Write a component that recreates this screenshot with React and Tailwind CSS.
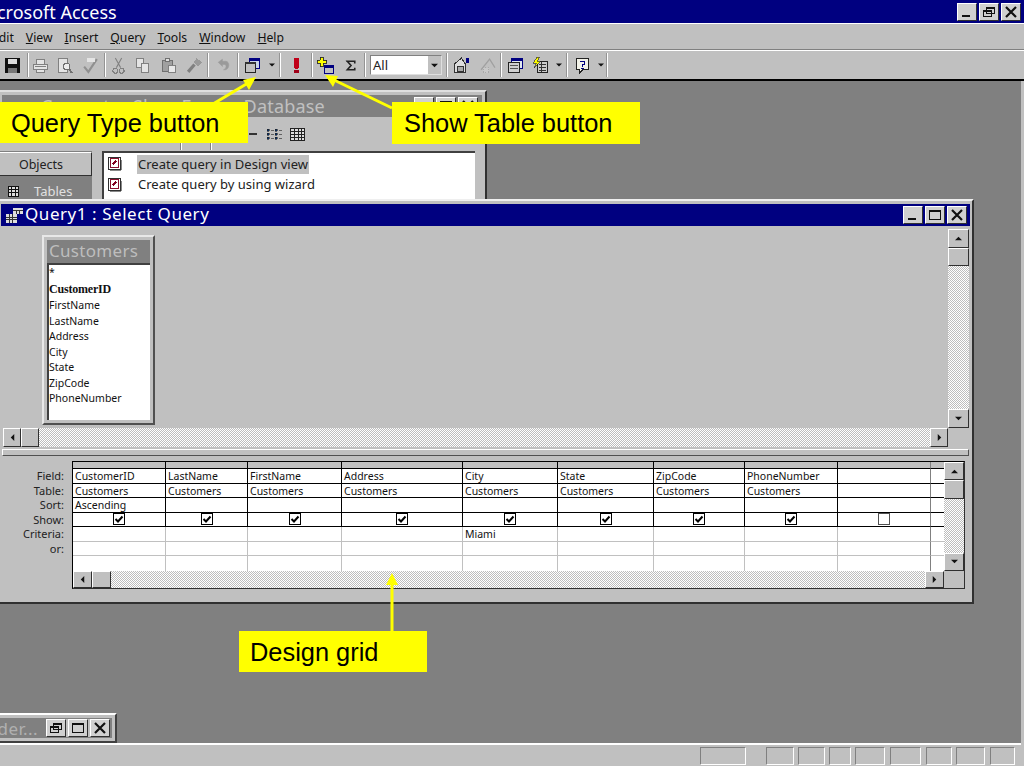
import React from 'react';

const ui = { fontFamily: '"Noto Sans", sans-serif' };
const hatch = 'bg-[repeating-conic-gradient(#ffffff_0_25%,#bdbdbd_0_50%)] bg-[length:2px_2px]';
const bevel = 'border border-t-white border-l-white border-r-[#303030] border-b-[#303030] bg-[#c0c0c0]';

const Ico = ({ children }) => (
    <svg viewBox="0 0 16 16" className="w-[17px] h-[17px]" shapeRendering="crispEdges">{children}</svg>
);

const SaveIcon = () => <Ico><rect x="1" y="1" width="14" height="14" fill="#111" /><rect x="4" y="2" width="8" height="5" fill="#ddd" /><rect x="4" y="10" width="8" height="5" fill="#777" /></Ico>;
const PrintIcon = () => <Ico><path d="M4 2h8v5H4zM1 7h14v5H1zM4 12h8v3H4z" fill="#e4e4e4" stroke="#808080" /><path d="M3 9h10" stroke="#808080" /></Ico>;
const PreviewIcon = () => <Ico><path d="M2 1h9v14H2z" fill="#e4e4e4" stroke="#808080" /><circle cx="10" cy="9" r="3" fill="#eee" stroke="#707070" /><path d="M12 11l3 4" stroke="#707070" strokeWidth="2" /></Ico>;
const SpellIcon = () => <Ico><path d="M2 9l4 5 8-12" fill="none" stroke="#909090" strokeWidth="2" shapeRendering="auto" /><path d="M5 1h7v4H5z" fill="#e4e4e4" /></Ico>;
const CutIcon = () => <Ico><path d="M5 1l5 9M11 1l-5 9" stroke="#808080" fill="none" shapeRendering="auto" /><circle cx="5" cy="13" r="2.3" fill="none" stroke="#808080" /><circle cx="11" cy="13" r="2.3" fill="none" stroke="#808080" /></Ico>;
const CopyIcon = () => <Ico><path d="M2 1h7v9H2z" fill="#e4e4e4" stroke="#808080" /><path d="M7 6h7v9H7z" fill="#e4e4e4" stroke="#808080" /></Ico>;
const PasteIcon = () => <Ico><path d="M2 3h10v11H2z" fill="#a0a0a0" stroke="#707070" /><path d="M5 1h4v3H5z" fill="#ddd" stroke="#707070" /><path d="M8 8h7v7H8z" fill="#e8e8e8" stroke="#808080" /></Ico>;
const PainterIcon = () => <Ico><path d="M10 1l5 4-4 4-4-4z" fill="#999" /><path d="M8 7l-6 7" stroke="#808080" strokeWidth="3" shapeRendering="auto" /></Ico>;
const UndoIcon = () => <Ico><path d="M3 5l4-3v2h3c4 0 4 7 0 8H8c3-1 3-5 1-5H7v2z" fill="#9a9a9a" stroke="#9a9a9a" strokeWidth="0.5" shapeRendering="auto" /></Ico>;
const QueryTypeIcon = () => <Ico><rect x="5" y="1" width="10" height="10" fill="#c8d4e8" stroke="#000080" /><rect x="5" y="1" width="10" height="3" fill="#000080" /><rect x="1" y="5" width="10" height="10" fill="#c0c0c0" stroke="#222" /><rect x="1" y="5" width="10" height="2" fill="#333" /></Ico>;
const BangIcon = () => <Ico><rect x="6" y="1" width="4" height="9" fill="#c00018" /><rect x="7" y="10" width="2" height="1" fill="#c00018" /><rect x="6" y="12" width="4" height="3" fill="#a00018" /></Ico>;
const ShowTableIcon = () => <Ico><rect x="7" y="8" width="9" height="8" fill="#c0c0c0" stroke="#000080" /><rect x="7" y="8" width="9" height="2" fill="#000080" /><path d="M3 0h3v3h3v3H6v3H3V6H0V3h3z" fill="#ffff00" stroke="#222" strokeWidth="0.8" /></Ico>;
const SigmaIcon = () => <Ico><path d="M4 4h8v2M11 4H5l3.5 4L5 12h7v-2" fill="none" stroke="#222" strokeWidth="1.5" shapeRendering="auto" /></Ico>;
const PropsIcon = () => <Ico><path d="M8 1L1 7v8h11V7z" fill="#ddd" stroke="#333" /><rect x="4" y="9" width="6" height="5" fill="#aaa" stroke="#333" /><rect x="12" y="1" width="3" height="5" fill="#000080" /></Ico>;
const BuildIcon = () => <Ico><path d="M2 12L10 2l5 8" fill="none" stroke="#a0a0a0" strokeWidth="1.2" shapeRendering="auto" /><path d="M4 10h5v5H4z" fill="#c8c8c8" stroke="#a8a8a8" strokeDasharray="1 1" /></Ico>;
const DbWinIcon = () => <Ico><rect x="4" y="1" width="11" height="10" fill="#e0e8f0" stroke="#000080" /><rect x="4" y="1" width="11" height="3" fill="#000080" /><rect x="1" y="5" width="11" height="10" fill="#d0d0d0" stroke="#222" /><path d="M3 8h7M3 11h7" stroke="#555" /></Ico>;
const NewObjIcon = () => <Ico><rect x="5" y="4" width="10" height="11" fill="#ccc" stroke="#222" /><path d="M7 7h6M7 10h6M7 13h6M9 5v9" stroke="#333" /><path d="M5 0L1 6h3L2 10l6-6H5l2-4z" fill="#ffff00" stroke="#222" strokeWidth="0.6" /></Ico>;
const HelpIcon = () => <Ico><path d="M2 1h12v11H8l-3 3v-3H2z" fill="#f2f2e8" stroke="#222" /><path d="M6 4h4v3H8v2" fill="none" stroke="#000080" strokeWidth="1.4" /><rect x="7" y="10" width="2" height="1" fill="#000080" /></Ico>;

const Tri = ({ dir, size = 7 }) => {
    const pts = {
        up: '0,6 4,2 8,6',
        down: '0,2 8,2 4,6',
        left: '6,0 6,8 2,4',
        right: '2,0 2,8 6,4',
    };
    return <svg viewBox="0 0 8 8" style={{ width: size, height: size }}><polygon points={pts[dir]} fill="#111" /></svg>;
};

const Drop = ({ w }) => <div className={`${w} flex items-center justify-center`}><Tri dir="down" size={6} /></div>;
const Sep = () => <div className="w-[2px] h-[24px] border-l border-r border-l-[#949494] border-r-white" />;
const Tool = ({ w, children }) => <div className={`${w} h-full flex items-center justify-center`}>{children}</div>;

const WinBtn = ({ kind, className = 'w-[20px] h-[18px]' }) => (
    <div className={`${className} bg-[#d0d0d0] border border-t-white border-l-white border-r-[#303030] border-b-[#303030] flex items-center justify-center`}>
        <svg viewBox="0 0 14 12" className="w-[14px] h-[12px]" shapeRendering="crispEdges">
            {kind === 'min' && <rect x="2" y="9" width="8" height="2" fill="#111" />}
            {kind === 'max' && <path d="M1.5 1.5h11v9h-11zM1.5 2.5h11" fill="none" stroke="#111" />}
            {kind === 'restore' && <path d="M4.5 1.5h8v6h-8zM1.5 4.5h8v6h-8zM4.5 2.5h8M1.5 5.5h8" fill="#d0d0d0" stroke="#111" />}
            {kind === 'close' && <path d="M2 1l10 10M12 1L2 11" stroke="#111" strokeWidth="2.2" shapeRendering="auto" />}
        </svg>
    </div>
);

const Arrow = ({ dir, className }) => (
    <div className={`${bevel} flex items-center justify-center shrink-0 ${className}`}><Tri dir={dir} /></div>
);

const VScroll = ({ up, thumb, track }) => (
    <div className="flex flex-col w-full">
        <Arrow dir="up" className={up} />
        <div className={`${bevel} w-full ${thumb}`} />
        <div className={`${hatch} ${track}`} />
        <Arrow dir="down" className={up} />
    </div>
);

const HScroll = ({ btn, className }) => (
    <div className={`flex ${className}`}>
        <Arrow dir="left" className={btn} />
        <div className={`${bevel} ${btn}`} />
        <div className={`${hatch} flex-1`} />
        <Arrow dir="right" className={btn} />
    </div>
);

const DocIcon = () => (
    <svg viewBox="0 0 16 16" className="w-[15px] h-[15px]" shapeRendering="crispEdges">
        <rect x="1" y="0" width="12" height="13" fill="#fff" stroke="#222" />
        <rect x="3" y="2" width="8" height="9" fill="#fff" stroke="#800020" />
        <path d="M5 8l4-4" stroke="#800020" strokeWidth="2" />
        <path d="M2 14h12V3" fill="none" stroke="#808080" />
    </svg>
);

const menus = [
    ['E', 'dit'], ['V', 'iew'], ['I', 'nsert'], ['Q', 'uery'], ['T', 'ools'], ['W', 'indow'], ['H', 'elp'],
];

const fields = ['CustomerID', 'FirstName', 'LastName', 'Address', 'City', 'State', 'ZipCode', 'PhoneNumber'];

const grid = 'grid grid-cols-[93px_82px_94px_121px_95px_96px_91px_93px_93px_14px]';

const columns = [
    ['CustomerID', 'Customers', 'Ascending', true, 'x'],
    ['LastName', 'Customers', '', true, ''],
    ['FirstName', 'Customers', '', true, ''],
    ['Address', 'Customers', '', true, ''],
    ['City', 'Customers', '', true, 'Miami'],
    ['State', 'Customers', '', true, ''],
    ['ZipCode', 'Customers', '', true, ''],
    ['PhoneNumber', 'Customers', '', true, ''],
    ['', '', '', false, ''],
    ['', '', '', null, ''],
];

const labels = ['Field:', 'Table:', 'Sort:', 'Show:', 'Criteria:', 'or:'];

const CheckBox = ({ on }) => (
    <div className={`w-[12px] h-[12px] bg-white border ${on ? 'border-black' : 'border-[#505050]'}`}>
        {on && (
            <svg viewBox="0 0 10 10" className="w-[10px] h-[10px]">
                <path d="M1.5 5l2.5 2.5 4.5-5" fill="none" stroke="#000" strokeWidth="2" />
            </svg>
        )}
    </div>
);

const DesignGrid = () => {
    const cell = (c, i) => (i === 8 ? 'border-r-[#808080]' : i === 9 ? 'border-r-0' : '');
    return (
        <div className="flex-1 min-w-0 bg-white">
            <div className={grid}>
                {columns.map((c, i) => (
                    <div key={i} className={`h-[7px] bg-[#c0c0c0] border-r border-b border-black ${cell(c, i)}`} />
                ))}
            </div>
            {[0, 1, 2].map((r) => (
                <div key={r} className={grid}>
                    {columns.map((c, i) => (
                        <div key={i} className={`h-[14.5px] pl-[2px] text-[10.5px] leading-[14px] text-[#111] whitespace-nowrap overflow-hidden border-r border-b border-black ${cell(c, i)}`}>{c[r]}</div>
                    ))}
                </div>
            ))}
            <div className={grid}>
                {columns.map((c, i) => (
                    <div key={i} className={`h-[14.5px] flex items-center justify-center border-r border-b border-black ${cell(c, i)}`}>
                        {c[3] !== null && <CheckBox on={c[3]} />}
                    </div>
                ))}
            </div>
            <div className={grid}>
                {columns.map((c, i) => (
                    <div key={i} className={`h-[14.5px] pl-[2px] text-[10.5px] leading-[14px] text-[#111] border-r border-b border-[#c0c0c0] ${cell(c, i)}`}>{i === 4 ? c[4] : ''}</div>
                ))}
            </div>
            {[0, 1].map((r) => (
                <div key={r} className={grid}>
                    {columns.map((c, i) => (
                        <div key={i} className={`h-[14.5px] border-r border-[#c0c0c0] ${r === 0 ? 'border-b' : ''} ${cell(c, i)}`} />
                    ))}
                </div>
            ))}
        </div>
    );
};

const App = () => {
    return (
        <div className="relative w-[1024px] h-[768px] overflow-hidden flex flex-col bg-[#c0c0c0]" style={ui}>
            {/* title bar */}
            <div className="h-[23px] shrink-0 bg-[#000080] flex items-center justify-between pr-[3px] overflow-hidden">
                <span className="ml-[-24px] text-[18px] leading-none text-white whitespace-nowrap">Microsoft Access</span>
                <div className="flex gap-[2px]">
                    <WinBtn kind="min" />
                    <WinBtn kind="restore" />
                    <WinBtn kind="close" />
                </div>
            </div>

            {/* menu */}
            <div className="h-[27px] shrink-0 border-t border-t-white border-b border-b-[#808080] flex items-center pt-[3px] text-[12.2px] text-[#111] overflow-hidden">
                <div className="flex items-center gap-[12px] ml-[-8px]">
                    {menus.map(([a, rest]) => (
                        <span key={a}><u>{a}</u>{rest}</span>
                    ))}
                </div>
            </div>

            {/* toolbar */}
            <div className="h-[31px] shrink-0 border-t border-t-white border-b-2 border-b-black flex items-center">
                <div className="flex items-center h-full ml-[-3px]">
                    <Tool w="w-[30px]"><SaveIcon /></Tool>
                    <Sep />
                    <Tool w="w-[23px]"><PrintIcon /></Tool>
                    <Tool w="w-[25px]"><PreviewIcon /></Tool>
                    <Tool w="w-[27px]"><SpellIcon /></Tool>
                    <Sep />
                    <Tool w="w-[24px]"><CutIcon /></Tool>
                    <Tool w="w-[24px]"><CopyIcon /></Tool>
                    <Tool w="w-[28px]"><PasteIcon /></Tool>
                    <Tool w="w-[25px]"><PainterIcon /></Tool>
                    <Sep />
                    <Tool w="w-[28px]"><UndoIcon /></Tool>
                    <Sep />
                    <Tool w="w-[26px]"><QueryTypeIcon /></Tool>
                    <Drop w="w-[14px]" />
                    <Sep />
                    <Tool w="w-[30px]"><BangIcon /></Tool>
                    <Sep />
                    <Tool w="w-[24px]"><ShowTableIcon /></Tool>
                    <Tool w="w-[27px]"><SigmaIcon /></Tool>
                    <Sep />
                    <div className="w-[80px] h-full flex items-center justify-center">
                        <div className="w-[72px] h-[20px] bg-white border border-t-[#808080] border-l-[#808080] border-r-[#dfdfdf] border-b-[#dfdfdf] flex items-center justify-between text-[13px] leading-none pl-[2px] text-[#222]">
                            <span>All</span>
                            <div className="w-[13px] h-full bg-[#c0c0c0] flex items-center justify-center"><Tri dir="down" /></div>
                        </div>
                    </div>
                    <Sep />
                    <Tool w="w-[26px]"><PropsIcon /></Tool>
                    <Tool w="w-[26px]"><BuildIcon /></Tool>
                    <Sep />
                    <Tool w="w-[26px]"><DbWinIcon /></Tool>
                    <Tool w="w-[24px]"><NewObjIcon /></Tool>
                    <Drop w="w-[14px]" />
                    <Sep />
                    <Tool w="w-[28px]"><HelpIcon /></Tool>
                    <Drop w="w-[10px]" />
                    <Sep />
                </div>
            </div>

            {/* desktop */}
            <div className="relative flex-1 mr-[3px] bg-[#808080] border-b-2 border-b-white">
                {/* database window */}
                <div className="absolute left-[-3px] top-[9px] w-[490px] h-[130px] p-[3px] bg-[#c0c0c0] border-t-2 border-l-2 border-t-[#dfdfdf] border-l-[#dfdfdf] border-r-2 border-b-2 border-r-[#303030] border-b-[#303030]">
                    <div className="h-[22px] bg-[#808080] flex items-center justify-between pr-[4px] overflow-hidden">
                        <span className="ml-[39px] text-[18px] leading-none text-[#c0c0c0] tracking-[0.2px] whitespace-nowrap">Computer Shop Exam : Database</span>
                        <div className="flex gap-[2px]">
                            <WinBtn kind="min" />
                            <WinBtn kind="max" />
                            <WinBtn kind="close" />
                        </div>
                    </div>
                    <div className="h-[34px] flex items-center pl-[178px] relative">
                        <div className="w-[2px] h-[26px] border-l border-r border-l-[#808080] border-r-white mt-[6px]" />
                        <div className="w-[2px] h-[26px] ml-[28px] border-l border-r border-l-[#808080] border-r-white mt-[6px]" />
                        <div className="ml-[37px] w-[8px] h-[2px] bg-[#333]" />
                        <svg viewBox="0 0 16 12" className="ml-[9px] w-[16px] h-[12px]" shapeRendering="crispEdges">
                            <path d="M1 1h2v2H1zM5 2h3M9 1h2v2H9zM13 2h3M1 5h2v2H1zM5 6h3M9 5h2v2H9zM13 6h3M1 9h2v2H1zM5 10h3M9 9h2v2H9zM13 10h3" fill="#003070" stroke="#222" strokeWidth="0.6" />
                        </svg>
                        <svg viewBox="0 0 16 14" className="ml-[7px] w-[16px] h-[14px]" shapeRendering="crispEdges">
                            <path d="M1 1h14v12H1zM1 4h14M1 7h14M1 10h14M5 1v12M9 1v12M12 1v12" fill="#ddd" stroke="#222" />
                        </svg>
                    </div>
                    <div className="flex gap-[10px] ml-[-4px]">
                        <div className="w-[94px] h-[60px] bg-[#808080] shrink-0">
                            <div className={`${bevel} h-[24px] mt-[1px] pt-[3px] flex items-center justify-center text-[12.5px] text-[#222] pr-[8px]`}>Objects</div>
                            <div className="h-[24px] mt-[4px] flex items-center gap-[14px] pl-[10px] text-[13px] text-[#e0e0e0]">
                                <svg viewBox="0 0 12 12" className="w-[12px] h-[12px]" shapeRendering="crispEdges">
                                    <path d="M0.5 0.5h10v10h-10zM0.5 3.5h10M0.5 6.5h10M3.5 0.5v10M7 0.5v10" fill="#ddd" stroke="#111" />
                                </svg>
                                <span>Tables</span>
                            </div>
                        </div>
                        <div className="w-[373px] h-[60px] bg-white border-t-2 border-l-2 border-[#404040] pl-[4px] pt-[1px] text-[13px] text-[#222]">
                            <div className="flex items-center gap-[14px] h-[20px]">
                                <DocIcon />
                                <span className="bg-[#c0c0c0] px-[1px] leading-[19px]">Create query in Design view</span>
                            </div>
                            <div className="flex items-center gap-[14px] h-[20px] mt-[1px]">
                                <DocIcon />
                                <span className="px-[1px]">Create query by using wizard</span>
                            </div>
                        </div>
                    </div>
                </div>

                {/* query window */}
                <div className="absolute left-[-3px] top-[118px] w-[977px] h-[405px] flex flex-col px-[2px] pt-[3px] bg-[#c0c0c0] border-t-2 border-l-2 border-t-[#efefef] border-l-[#efefef] border-r-2 border-b-2 border-r-[#303030] border-b-[#303030]">
                    <div className="h-[22px] shrink-0 bg-[#000080] flex items-center justify-between pr-[3px]">
                        <div className="flex items-center gap-[2px] pl-[5px] pb-[3px]">
                            <svg viewBox="0 0 16 14" className="w-[17px] h-[15px] mt-[3px]" shapeRendering="crispEdges">
                                <path d="M0 6h10v8H0z" fill="#ddd" /><path d="M7 0h9v6H7z" fill="#ddd" /><path d="M7 2h9M0 9h10M0 11h10M3 6v8M6 6v8M10 3v3M13 3v3" stroke="#333" />
                            </svg>
                            <span className="text-[17px] leading-none text-white tracking-[0.55px] whitespace-nowrap">Query1 : Select Query</span>
                        </div>
                        <div className="flex gap-[2px]">
                            <WinBtn kind="min" />
                            <WinBtn kind="max" />
                            <WinBtn kind="close" />
                        </div>
                    </div>

                    <div className="mx-px mt-px h-[220px] shrink-0 flex">
                        <div className="flex-1 min-w-0 flex flex-col">
                            <div className="relative flex-1">
                                <div className="absolute left-[40px] top-[8px] w-[113px] h-[190px] bg-[#c0c0c0] p-[3px] border-2 border-t-[#e8e8e8] border-l-[#e8e8e8] border-r-[#505050] border-b-[#505050] flex flex-col">
                                    <div className="h-[23px] shrink-0 bg-[#808080] flex items-center pl-[2px] pb-[3px] text-[17px] leading-none text-[#bdbdbd] tracking-[0.3px]">Customers</div>
                                    <div className="flex-1 bg-white border-t-2 border-l-2 border-[#404040] text-[10.5px] text-[#111]">
                                        <div className="h-[15px] leading-[15px]">*</div>
                                        <div className="h-[18px] leading-[18px] font-bold font-['Liberation_Serif'] tracking-[-0.2px] text-[12px]">CustomerID</div>
                                        {fields.slice(1).map((f) => (
                                            <div key={f} className="h-[15.5px] leading-[15.5px]">{f}</div>
                                        ))}
                                    </div>
                                </div>
                            </div>
                            <HScroll btn="w-[18px] h-[19px]" className="h-[19px] pl-[1px]" />
                        </div>
                        <div className="w-[21px] shrink-0 flex flex-col pt-[2px]">
                            <VScroll up="h-[19px] w-full" thumb="h-[18px]" track="h-[143px]" />
                            <div className="flex-1" />
                        </div>
                    </div>

                    <div className="mx-px mt-[2px] h-[7px] shrink-0 bg-[#c0c0c0] border border-t-white border-l-white border-r-[#505050] border-b-[#505050]" />

                    <div className="mx-px flex-1 flex pt-[5px] pb-[13px]">
                        <div className="w-[70px] shrink-0 pt-[8px] pr-[8px] text-right text-[11px] text-[#222]">
                            {labels.map((l) => (
                                <div key={l} className="h-[14.5px] leading-[14px]">{l}</div>
                            ))}
                        </div>
                        <div className="w-[893px] border-t border-l border-black flex flex-col bg-[#c0c0c0] border-b border-b-[#303030] border-r border-r-[#303030]">
                            <div className="flex h-[108.5px]">
                                <DesignGrid />
                                <div className="w-[20px] shrink-0">
                                    <VScroll up="h-[18px] w-full" thumb="h-[19px]" track="h-[53.5px]" />
                                </div>
                            </div>
                            <div className="flex flex-1">
                                <HScroll btn="w-[19px] h-full" className="flex-1 min-w-0" />
                                <div className="w-[20px] shrink-0" />
                            </div>
                        </div>
                    </div>
                </div>

                {/* minimized window */}
                <div className="absolute left-[-3px] top-[632px] w-[120px] h-[30px] p-[3px] bg-[#c0c0c0] border-t-2 border-t-white border-r-2 border-b-2 border-r-[#404040] border-b-[#404040]">
                    <div className="h-full bg-[#808080] flex items-center justify-end pr-[2px] gap-[8px] overflow-hidden">
                        <span className="text-[17px] leading-none text-[#b0b0b0] tracking-[0.4px] whitespace-nowrap">der...</span>
                        <div className="flex gap-[2px] bg-[#c0c0c0]">
                            <WinBtn kind="restore" />
                            <WinBtn kind="max" />
                            <WinBtn kind="close" />
                        </div>
                    </div>
                </div>
            </div>

            {/* status bar */}
            <div className="h-[23px] shrink-0 flex items-center border-b-2 border-b-white">
                <div className="flex-1" />
                {['w-[46px] mr-[20px]', 'w-[28px] mr-[4px]', 'w-[27px] mr-[4px]', 'w-[22px] mr-[4px]', 'w-[30px] mr-[5px]', 'w-[31px] mr-[5px]', 'w-[26px] mr-[4px]', 'w-[29px] mr-[5px]', 'w-[25px] mr-[9px]'].map((c, i) => (
                    <div key={i} className={`${c} h-[18px] border border-t-[#808080] border-l-[#808080] border-r-white border-b-white`} />
                ))}
            </div>

            {/* annotations */}
            <svg viewBox="0 0 1024 768" className="absolute inset-0 w-[1024px] h-[768px] pointer-events-none">
                <path d="M213 104L248 83" stroke="#ffff00" strokeWidth="3" />
                <polygon points="256,77 243,80 249,90" fill="#ffff00" />
                <path d="M392 108L334 80" stroke="#ffff00" strokeWidth="3" />
                <polygon points="325,75 338,76 333,87" fill="#ffff00" />
                <path d="M392 631V582" stroke="#ffff00" strokeWidth="3" />
                <polygon points="392,573 386,585 398,585" fill="#ffff00" />
            </svg>
            <div className="absolute left-0 top-[102px] w-[248px] h-[41px] bg-[#ffff00] pl-[11px] text-[25.4px] leading-[42px] text-black font-['Liberation_Sans']">Query Type button</div>
            <div className="absolute left-[392px] top-[102px] w-[248px] h-[42px] bg-[#ffff00] pl-[12px] text-[25.4px] leading-[43px] text-black font-['Liberation_Sans']">Show Table button</div>
            <div className="absolute left-[239px] top-[631px] w-[188px] h-[41px] bg-[#ffff00] pl-[11px] text-[25.4px] leading-[42px] text-black font-['Liberation_Sans']">Design grid</div>
        </div>
    );
};

export default App;
